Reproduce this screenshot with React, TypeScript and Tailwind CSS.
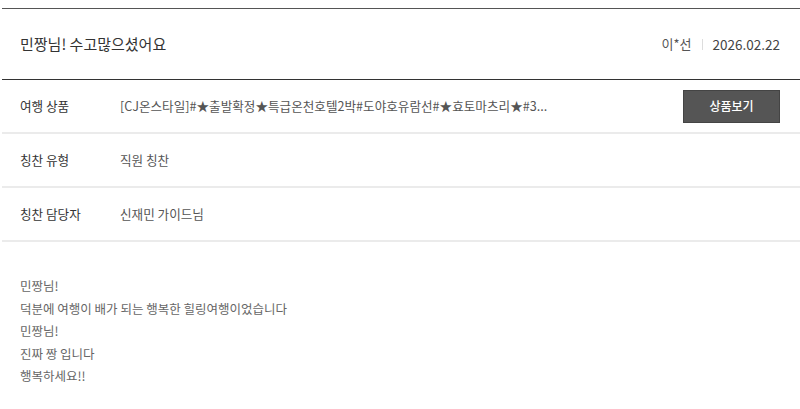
import React from "react";

interface InfoRow {
    label: string;
    value: string;
    button?: string;
}

const rows: InfoRow[] = [
    {
        label: "여행 상품",
        value: "[CJ온스타일]#★출발확정★특급온천호텔2박#도야호유람선#★효토마츠리★#3...",
        button: "상품보기",
    },
    { label: "칭찬 유형", value: "직원 칭찬" },
    { label: "칭찬 담당자", value: "신재민 가이드님" },
];

const bodyLines = [
    "민짱님!",
    "덕분에 여행이 배가 되는 행복한 힐링여행이었습니다",
    "민짱님!",
    "진짜 짱 입니다",
    "행복하세요!!",
];

const App: React.FC = () => {
    return (
        <div
            className="w-[800px] h-[409px] bg-white pt-2 pl-[2px]"
            style={{ fontFamily: '"Noto Sans CJK KR", "Noto Sans", sans-serif' }}
        >
            {/* header */}
            <div className="h-[72px] border-t border-b border-t-[#555] border-b-[#333] flex items-center justify-between pl-[18px] pr-[20px]">
                <h2 className="text-[15px] text-[#333]">민짱님! 수고많으셨어요</h2>
                <div className="flex items-center">
                    <span className="text-[13px] text-[#555]">이*선</span>
                    <span className="mx-[10px] h-[11px] w-px bg-[#ddd]" />
                    <span className="text-[13.5px] text-[#444]">2026.02.22</span>
                </div>
            </div>

            {/* info rows */}
            {rows.map((r) => (
                <div
                    key={r.label}
                    className="h-[54px] border-b-2 border-[#ebebeb] flex items-center pl-[18px] pr-[20px] text-[12.6px]"
                >
                    <span className="w-[100px] shrink-0 text-[#333]">{r.label}</span>
                    <span className="flex-1 text-[#555] truncate">{r.value}</span>
                    {r.button && (
                        <button className="w-[97px] h-[33px] bg-[#555] text-white text-[12px] font-medium border border-[#444]">
                            {r.button}
                        </button>
                    )}
                </div>
            ))}

            {/* body */}
            <div className="pt-[33px] pl-[18px] text-[12.5px] leading-[22.5px] text-[#666]">
                {bodyLines.map((l, i) => (
                    <p key={i}>{l}</p>
                ))}
            </div>
        </div>
    );
};

export default App;
